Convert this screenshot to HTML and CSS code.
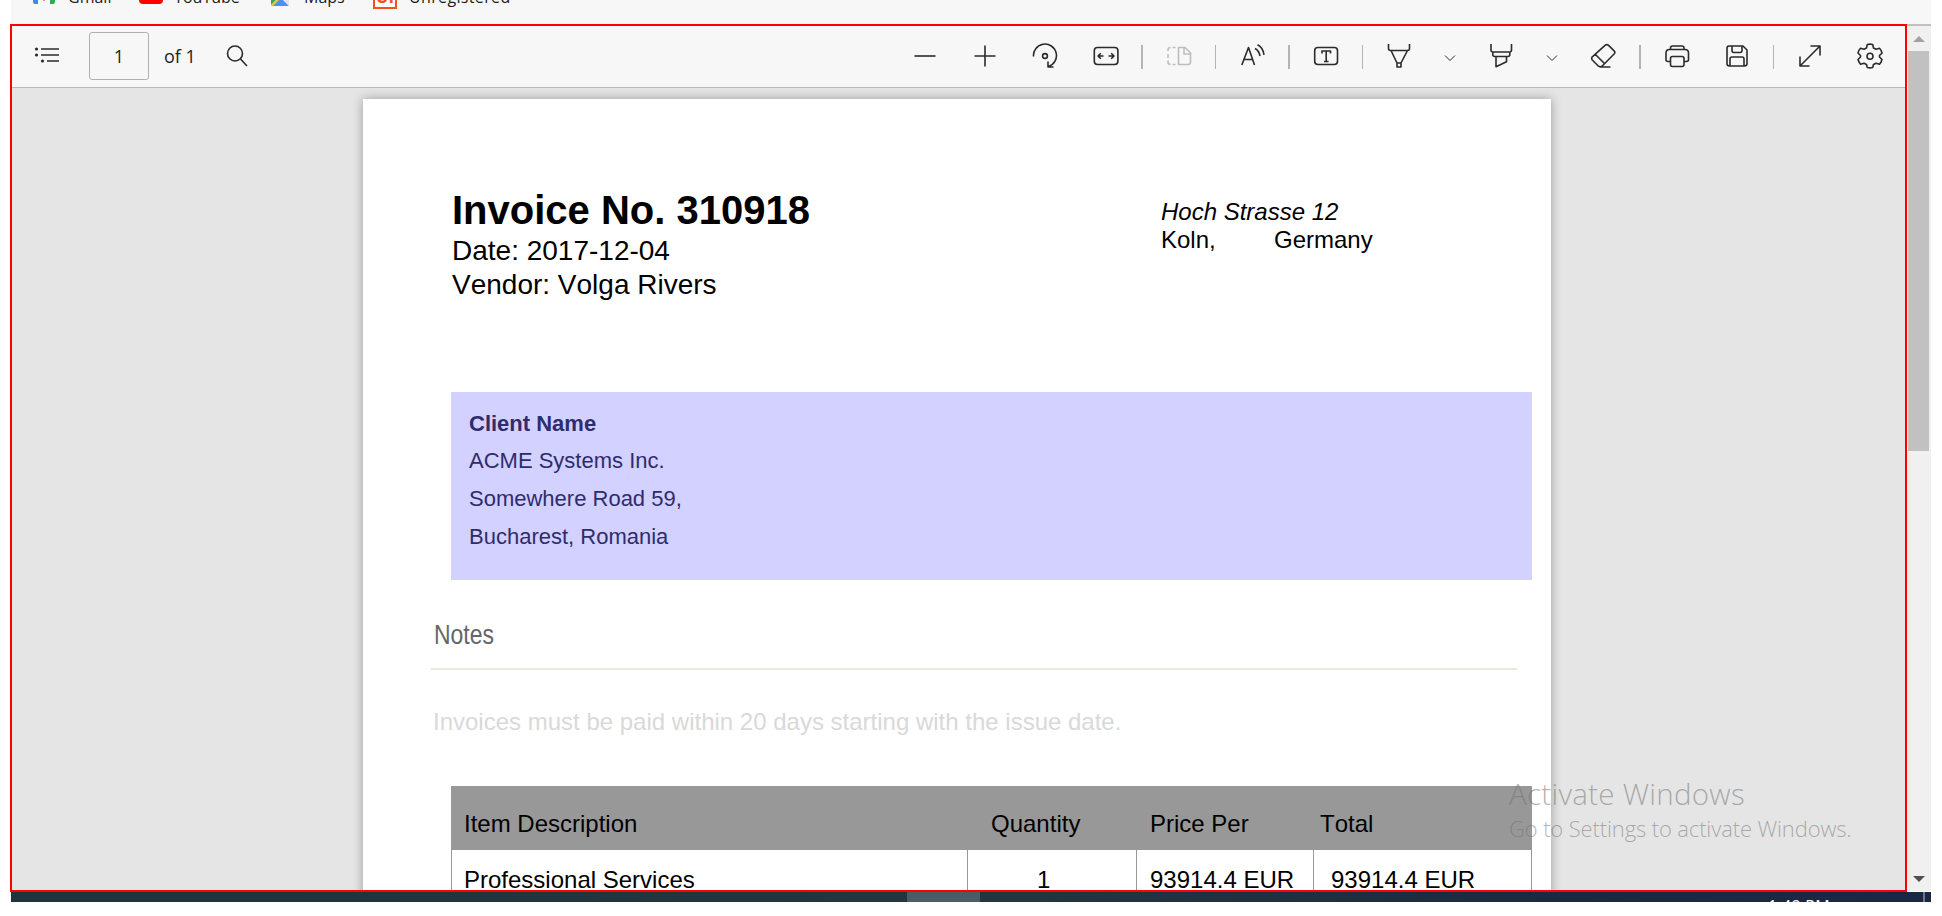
FILE: index.html
```html
<!DOCTYPE html>
<html lang="en">
<head>
<meta charset="utf-8">
<title>Invoice No. 310918</title>
<link rel="stylesheet" href="styles.css">
</head>
<body>
<div class="screen">
  <div class="bookmarks">
    <a class="bookmark gmail"><svg class="fav" width="22" height="18" viewBox="0 0 22 18"><path fill="#4285f4" d="M0 2h5v16H2q-2 0-2-2z"/><path fill="#34a853" d="M17 2h5v14q0 2-2 2h-3z"/><path fill="#ea4335" d="M5 5l6 5 6-5v5l-6 5-6-5z"/></svg><span>Gmail</span></a>
    <a class="bookmark youtube"><svg class="fav" width="24" height="18" viewBox="0 0 24 18"><rect width="24" height="18" rx="4" fill="#f00"/><path fill="#fff" d="M9.500 5l7 4.500-7 4z"/></svg><span>YouTube</span></a>
    <a class="bookmark maps"><svg class="fav" width="20" height="20" viewBox="0 0 20 20"><path fill="#34a853" d="M1 1h18L1 19z"/><path fill="#fbc02d" d="M1 19L17 3l2 2L5 20H1z"/><path fill="#4a90f5" d="M3 20l8-8 8 8z"/><path fill="#dfe3ea" d="M12 11l5-5 2 2v12z"/></svg><span>Maps</span></a>
    <a class="bookmark ui"><span class="ui-logo">UI</span><span>Unregistered</span></a>
  </div>

  <div class="main">
    <div class="frame">
      <div class="toolbar">
        <svg class="icon contents" width="26" height="26" viewBox="0 0 26 26"><path d="M7 6h18M7 12h18M13 18h12"/><g class="solid"><circle cx="2.500" cy="6" r="1.600"/><circle cx="2.500" cy="12" r="1.600"/><circle cx="8.500" cy="18" r="1.600"/></g></svg>
        <div class="page-input">1</div>
        <div class="page-count">of 1</div>
        <svg class="icon search" width="26" height="26" viewBox="0 0 26 26"><circle cx="10" cy="10.500" r="7.500"/><path d="M15.500 16l6.500 7"/></svg>

        <svg class="icon first" width="26" height="26" viewBox="0 0 26 26"><path d="M2.500 13h21"/></svg>
        <svg class="icon g34" width="26" height="26" viewBox="0 0 26 26"><path d="M2.500 13h21M13 2.500v21"/></svg>
        <svg class="icon g34" width="26" height="26" viewBox="0 0 26 26"><path d="M1.500 13.500A11.500 11.500 0 1 1 16.500 23.500M16 18.500v5.500h5.500"/><circle cx="13" cy="13" r="2.400"/></svg>
        <svg class="icon g35" width="26" height="26" viewBox="0 0 26 26"><rect x="1.300" y="4.500" width="23.600" height="17" rx="3.200"/><path d="M5 13h5.500M7.800 10.200L5 13l2.800 2.800M15.500 13H21M18.200 10.200L21 13l-2.800 2.800"/></svg>
        <i class="sep g22"></i>
        <svg class="icon faded g23" width="26" height="26" viewBox="0 0 26 26"><path d="M12.500 4.500h6.500l5.500 5.500v9q0 2.500-2.500 2.500h-9.500zM18 4.500v6.500h6.500"/><path d="M9.500 4.500H6.500M4.500 4.500Q2 4.500 2 7v1M2 11v4M2 17.500v1.500q0 2.500 2.500 2.500M6.500 21.500h3"/></svg>
        <i class="sep thin g23"></i>
        <svg class="icon g24" width="26" height="26" viewBox="0 0 26 26"><path d="M1.800 22L8.500 4.500 14.500 22M4.500 16.500h8M15 5.500q4 2 5 7.500M17.500 1.800q5.500 2.700 6.500 10"/></svg>
        <i class="sep g22"></i>
        <svg class="icon g23" width="26" height="26" viewBox="0 0 26 26"><rect x="1.700" y="4.500" width="22.800" height="17" rx="3.200"/><path d="M9 10.500V8h8.500v2.500M13.200 8v10.500M11 18.500h4.500"/></svg>
        <i class="sep thin g23"></i>
        <svg class="icon g23" width="26" height="26" viewBox="0 0 26 26"><path d="M2.500 1v4.500q0 2 2 2h17q2 0 2-2V1M5 7.500l6 12.500v4h4v-4L21.500 7.500M11 20h4"/></svg>
        <svg class="icon chev g25" width="26" height="26" viewBox="0 0 26 26"><path d="M8 12.500l5 5 5-5"/></svg>
        <svg class="icon g25" width="26" height="26" viewBox="0 0 26 26"><path d="M3 1v6q0 2 2 2h16.500q2 0 2-2V1M4.800 9v2.500q0 2 2 2h13q2 0 2-2V9M8 13.500v10.300l10.500-5v-5.300"/></svg>
        <svg class="icon chev g25" width="26" height="26" viewBox="0 0 26 26"><path d="M8 12.500l5 5 5-5"/></svg>
        <svg class="icon g25" width="26" height="26" viewBox="0 0 26 26"><path d="M15.300 2.200q1.500-1.200 3 0l5.800 5.600q1.500 1.600 0 3.200L12 23.200q-1.800 1.200-3.500 0L2.300 17q-1.200-1.600 0-3.200zM5.200 11.200l9 9M9.500 24h11"/></svg>
        <i class="sep g23"></i>
        <svg class="icon g23" width="26" height="26" viewBox="0 0 26 26"><path d="M6.500 6.500V5q0-2 2-2h9.500q2 0 2 2v1.500M6.500 18.500H4q-2 0-2-2V10q0-3.500 3.500-3.500H21q3.500 0 3.500 3.500v6.500q0 2-2 2h-2.500"/><rect x="6.500" y="13.500" width="13.500" height="10" rx="2"/></svg>
        <svg class="icon g34" width="26" height="26" viewBox="0 0 26 26"><path d="M5 3h14l4 4v13.500q0 2.500-2.500 2.500H5.500Q3 23 3 20.500V5.500Q3 3 5 3zM8 3v4.500q0 2 2 2h6q2 0 2-2V3M6 23v-7q0-2 2-2h10q2 0 2 2v7"/></svg>
        <i class="sep thin g23"></i>
        <svg class="icon g23" width="26" height="26" viewBox="0 0 26 26"><path d="M3 23L23 3M13.500 3H23v9.500M3 13.500V23h9.500"/></svg>
        <svg class="icon g34" width="26" height="26" viewBox="0 0 26 26"><path d="M10.300 1.500Q13 .8 15.700 1.500L16.500 5 19 6.300 22.500 5.300Q24.500 7.300 25 10L22.500 12.500V14L25 16.500Q24.300 19.300 22.500 21.200L19 20.200 16.500 21.500 15.700 24.500Q13 25.200 10.300 24.500L9.500 21.500 7 20.200 3.500 21.200Q1.600 19 1 16.500L3.500 14V12.500L1 10Q1.600 7.300 3.500 5.300L7 6.300 9.500 5z"/><circle cx="13" cy="13.200" r="3"/></svg>
      </div>

      <div class="viewer">
        <div class="page">
          <div class="head">
            <div class="invoice">
              <h1>Invoice No. 310918</h1>
              <p>Date: 2017-12-04</p>
              <p>Vendor: Volga Rivers</p>
            </div>
            <div class="address">
              <em>Hoch Strasse 12</em>
              <div class="city"><span>Koln,</span><span>Germany</span></div>
            </div>
          </div>
          <div class="client">
            <b>Client Name</b>
            <p>ACME Systems Inc.</p>
            <p>Somewhere Road 59,</p>
            <p>Bucharest, Romania</p>
          </div>
          <h2>Notes</h2>
          <div class="rule"></div>
          <p class="terms">Invoices must be paid within 20 days starting with the issue date.</p>
          <div class="items">
            <div class="row header"><span>Item Description</span><span>Quantity</span><span>Price Per</span><span>Total</span></div>
            <div class="row"><span>Professional Services</span><span>1</span><span>93914.4 EUR</span><span>93914.4 EUR</span></div>
          </div>
        </div>
      </div>
    </div>

    <div class="scrollbar">
      <svg class="up" width="12" height="6" viewBox="0 0 12 6"><path d="M0 6l6-6 6 6z"/></svg>
      <div class="thumb"></div>
      <svg class="down" width="12" height="6" viewBox="0 0 12 6"><path d="M0 0h12l-6 6z"/></svg>
    </div>
  </div>

  <div class="taskbar"><div class="active-task"></div><div class="clock">1:49 PM</div><i class="show-desktop"></i></div>

  <div class="watermark">
    <div class="wm-title">Activate Windows</div>
    <div class="wm-text">Go to Settings to activate Windows.</div>
  </div>
</div>
</body>
</html>
```
FILE: styles.css
```css
* { box-sizing: border-box; }
body, h1, h2, p { margin: 0; }
body { background: #fff; font-family: "Liberation Sans", Arial, sans-serif; overflow: hidden; }

.screen { position: relative; width: 1921px; height: 902px; margin-left: 10px; overflow: hidden; }

.bookmarks { display: flex; height: 24px; margin-left: 1px; background: #f7f7f7; font: 16px/22px "Open Sans", sans-serif; color: #1b1b1b; overflow: hidden; }
.bookmark { display: flex; align-items: flex-start; height: 22px; margin-top: -14px; }
.fav { flex: none; }
.gmail { width: 106px; padding-left: 22px; gap: 13px; }
.youtube { width: 131px; padding-left: 22px; gap: 11px; }
.maps { width: 103px; padding-left: 22px; gap: 14px; }
.ui { padding-left: 22px; gap: 12px; letter-spacing: .35px; }
.ui-logo { width: 24px; height: 23px; border: 2px solid #f4511e; color: #f4511e; background: #fff; font: bold 17px/18px "Open Sans", sans-serif; letter-spacing: 0; text-align: center; }

.main { display: flex; height: 868px; }
.frame { width: 1897px; border: 2px solid #f00; overflow: hidden; }

.toolbar { display: flex; align-items: center; height: 62px; padding-bottom: 1px; background: #f7f7f7; border-bottom: 1px solid #b9b9b9; }
.icon { flex: none; fill: none; stroke: #2b2b2b; stroke-width: 1.6; stroke-linecap: butt; stroke-linejoin: round; }
.icon .solid { fill: #2b2b2b; stroke: none; }
.faded { stroke: #bdbdbd; }
.chev { stroke-width: 1; }
.contents { margin-left: 22px; }
.page-input { width: 60px; height: 48px; margin-left: 29px; border: 1px solid #b0b0b0; border-radius: 3px; font: 18px/47px "Open Sans", sans-serif; color: #222; text-align: center; }
.page-count { width: 60px; padding-left: 15px; font: 18px/48px "Open Sans", sans-serif; color: #222; }
.search { margin-left: 16px; }
.first { margin-left: 661px; }
.sep { flex: none; width: 2px; height: 24px; margin-top: 1px; background: #b4b4b4; }
.thin { width: 1px; }
.g22 { margin-left: 22px; }
.g23 { margin-left: 23px; }
.g24 { margin-left: 24px; }
.g25 { margin-left: 25px; }
.g34 { margin-left: 34px; }
.g35 { margin-left: 35px; }

.viewer { height: 802px; padding: 11px 0 0 351px; background: #e5e5e5; overflow: hidden; }
.page { width: 1188px; height: 1600px; padding-top: 88px; background: #fff; box-shadow: 0 0 10px rgba(0, 0, 0, .32); color: #000; font-kerning: none; }

.head { display: flex; height: 205px; padding-left: 89px; }
.invoice { width: 709px; font-size: 28px; line-height: 34px; }
.invoice h1 { font-size: 40px; line-height: 46px; margin-bottom: 1px; }
.address { padding-top: 11px; font-size: 24px; line-height: 28px; }
.address em { display: block; }
.city { display: flex; }
.city span:first-child { width: 113px; }

.client { width: 1081px; height: 188px; margin-left: 88px; padding: 13px 18px; background: #d3d1ff; color: #2f2c6d; font-size: 22px; line-height: 38px; }
.client b { display: block; line-height: 37px; }

h2 { width: 120px; margin: 38px 0 16px 71px; font-size: 28px; font-weight: normal; line-height: 34px; color: #666; transform: scaleX(.82); transform-origin: left; }
.rule { width: 1086px; height: 2px; margin-left: 68px; background: #ece8de; }
.terms { margin: 38px 0 50px 70px; font-size: 24px; line-height: 28px; color: #d9d9d9; }

.items { width: 1081px; margin-left: 88px; font-size: 24px; line-height: 28px; }
.row { display: grid; grid-template-columns: 516px 169px 177px 219px; height: 64px; }
.row span { padding: 16px 0 0 12px; border-left: 1px solid #989898; }
.row span:nth-child(2) { padding-left: 69px; }
.row span:nth-child(3) { padding-left: 13px; }
.row span:nth-child(4) { padding-left: 17px; border-right: 1px solid #989898; }
.header { background: #989898; }
.header span { padding-top: 24px; }
.header span:nth-child(2) { padding-left: 23px; }
.header span:nth-child(4) { padding-left: 6px; }

.scrollbar { display: flex; flex-direction: column; align-items: center; width: 24px; height: 867px; padding-top: 10px; background: #f0f0f0; border-top: 2px solid #c1c1c1; }
.up { fill: #a3a3a3; }
.thumb { width: 21px; height: 400px; margin: 9px 2px 0 0; background: #c1c1c1; }
.down { margin-top: auto; margin-bottom: 9px; fill: #505050; }

.taskbar { display: flex; height: 10px; margin-left: 1px; background: linear-gradient(90deg, #20343d 0, #22363f 53%, #1b2a40 80%, #1a2744 100%); overflow: hidden; }
.active-task { width: 73px; margin-left: 896px; background: #4c5c65; }
.clock { margin: 3px 0 0 788px; width: 62px; font: 16px/22px "Open Sans", sans-serif; letter-spacing: .3px; color: #fff; white-space: nowrap; }
.show-desktop { width: 2px; margin-left: 93px; background: #6c7685; }

/* Overlay painted above every window */
.watermark { position: absolute; left: 1499px; top: 773px; font-family: "Open Sans", sans-serif; font-weight: 300; color: rgba(115, 115, 115, .55); white-space: nowrap; }
.wm-title { font-size: 29.500px; line-height: 42px; letter-spacing: .28px; }
.wm-text { font-size: 22px; line-height: 27px; letter-spacing: -.13px; }
```
